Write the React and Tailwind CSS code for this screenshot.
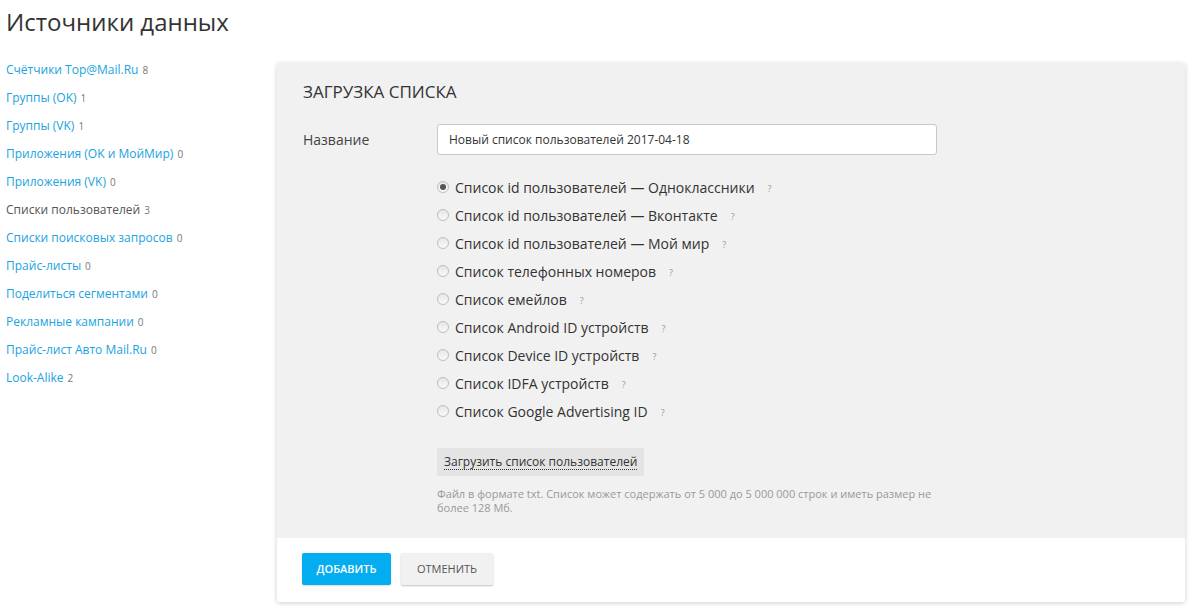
import React, { useState } from "react";

const sources = [
  { label: "Счётчики Top@Mail.Ru", count: 8, link: true },
  { label: "Группы (OK)", count: 1, link: true },
  { label: "Группы (VK)", count: 1, link: true },
  { label: "Приложения (OK и МойМир)", count: 0, link: true },
  { label: "Приложения (VK)", count: 0, link: true },
  { label: "Списки пользователей", count: 3, link: false },
  { label: "Списки поисковых запросов", count: 0, link: true },
  { label: "Прайс-листы", count: 0, link: true },
  { label: "Поделиться сегментами", count: 0, link: true },
  { label: "Рекламные кампании", count: 0, link: true },
  { label: "Прайс-лист Авто Mail.Ru", count: 0, link: true },
  { label: "Look-Alike", count: 2, link: true },
];

const listTypes = [
  "Список id пользователей — Одноклассники",
  "Список id пользователей — Вконтакте",
  "Список id пользователей — Мой мир",
  "Список телефонных номеров",
  "Список емейлов",
  "Список Android ID устройств",
  "Список Device ID устройств",
  "Список IDFA устройств",
  "Список Google Advertising ID",
];

function Radio({ checked }) {
  return (
    <span className="w-[12px] h-[12px] rounded-full border border-[#bdbdbd] bg-gradient-to-b from-[#e6e6e6] to-[#fafafa] flex items-center justify-center shrink-0">
      {checked && <span className="w-[6px] h-[6px] rounded-full bg-[#555]" />}
    </span>
  );
}

export default function App() {
  const [selected, setSelected] = useState(0);
  const [name, setName] = useState("Новый список пользователей 2017-04-18");

  return (
    <div className="min-h-[608px] bg-white text-[#333] font-['Open_Sans',sans-serif]">
      <h1 className="pl-[6px] pt-[6px] text-[24px] leading-[32px] text-[#333] font-normal">
        Источники данных
      </h1>

      <div className="flex mt-[18px]">
        <ul className="w-[277px] shrink-0 pl-[6px]">
          {sources.map((s) => (
            <li key={s.label} className="h-[28px] leading-[28px] text-[12px] whitespace-nowrap">
              <span className={s.link ? "text-[#1aa3e0]" : "text-[#555]"}>{s.label}</span>
              <span className="ml-[4px] text-[10px] text-[#777]">{s.count}</span>
            </li>
          ))}
        </ul>

        <div className="flex-1 mr-[12px] mt-[7px] rounded-[3px] shadow-[0_1px_5px_rgba(0,0,0,0.2)] overflow-hidden">
          <div className="bg-[#f1f1f1] pl-[26px] pr-[26px] pt-[19px] pb-[23px]">
            <h2 className="text-[17px] leading-[20px] uppercase text-[#333] font-normal">Загрузка списка</h2>

            <div className="flex items-center mt-[22px]">
              <label className="w-[134px] text-[14px] text-[#444]">Название</label>
              <input
                value={name}
                onChange={(e) => setName(e.target.value)}
                className="w-[500px] h-[31px] bg-white border border-[#c8c8c8] rounded-[3px] px-[11px] text-[12px] text-[#333] outline-none"
              />
            </div>

            <div className="ml-[134px] mt-[18px]">
              {listTypes.map((t, i) => (
                <div
                  key={t}
                  onClick={() => setSelected(i)}
                  className="h-[28px] flex items-center cursor-pointer"
                >
                  <Radio checked={selected === i} />
                  <span className="ml-[6px] text-[14px] text-[#333]">{t}</span>
                  <span className="ml-[13px] text-[9px] text-[#999] mt-[3px]">?</span>
                </div>
              ))}

              <button
                type="button"
                className="mt-[23px] h-[28px] px-[7px] bg-[#e4e4e4] text-[12px] text-[#333]"
              >
                <span className="border-b border-dotted border-[#333] leading-[15px] inline-block">
                  Загрузить список пользователей
                </span>
              </button>

              <p className="mt-[11px] w-[500px] text-[11px] leading-[14px] text-[#999]">
                Файл в формате txt. Список может содержать от 5 000 до 5 000 000 строк и иметь размер не более 128 Мб.
              </p>
            </div>
          </div>

          <div className="bg-white flex gap-[10px] pl-[25px] pt-[15px] pb-[17px]">
            <button
              type="button"
              className="w-[89px] h-[32px] rounded-[2px] bg-[#03adf0] text-white text-[11px] font-semibold uppercase shadow-[0_1px_2px_rgba(0,0,0,0.15)]"
            >
              Добавить
            </button>
            <button
              type="button"
              className="w-[92px] h-[32px] rounded-[2px] bg-[#f1f1f1] text-[#555] text-[11px] uppercase shadow-[0_1px_2px_rgba(0,0,0,0.25)]"
            >
              Отменить
            </button>
          </div>
        </div>
      </div>
    </div>
  );
}
